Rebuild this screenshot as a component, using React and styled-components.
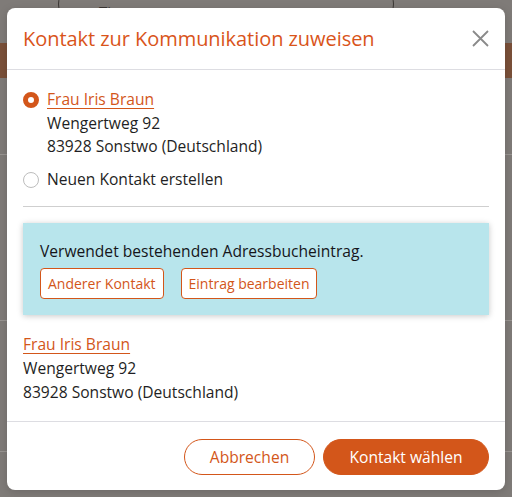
import React from "react";
import styled, { createGlobalStyle } from "styled-components";

const GlobalStyle = createGlobalStyle`
  html, body { margin: 0; padding: 0; }
  body {
    font-family: "Open Sans", "Noto Sans", sans-serif;
    background: #7f7b78;
    width: 512px;
    height: 497px;
    overflow: hidden;
  }
`;

const ORANGE = "#d3561a";
const TEXT = "#1f1f24";

const Page = styled.div`
  position: relative;
  width: 512px;
  height: 497px;
  overflow: hidden;
  background: #7f7b78;
  color: #222;
  display: flex;
  flex-direction: column;
`;

const PageTop = styled.div`
  height: 43px;
  display: flex;
  justify-content: center;
`;

const SearchPill = styled.div`
  width: 336px;
  height: 40px;
  margin-top: -16px;
  margin-left: -60px;
  border: 1.5px solid #3a3633;
  border-radius: 22px;
  font-size: 15px;
  color: #3a3633;
  display: flex;
  align-items: flex-end;
  padding: 0 0 2px 40px;
  box-sizing: border-box;
`;

const BrownBand = styled.div`
  height: 35px;
  background: #7a5039;
`;

const PageRow = styled.div`
  height: ${(p) => p.h}px;
  border-bottom: 1px solid #999592;
`;

const Backdrop = styled.div`
  position: absolute;
  inset: 0;
  display: flex;
  align-items: flex-start;
  justify-content: flex-start;
  padding: 8px 0 0 7px;
`;

const Modal = styled.div`
  width: 498px;
  height: 482px;
  background: #fff;
  border-radius: 8px;
  display: flex;
  flex-direction: column;
  box-shadow: 0 2px 10px rgba(0, 0, 0, 0.15);
`;

const Header = styled.div`
  height: 62px;
  box-sizing: border-box;
  padding: 0 16px;
  display: flex;
  align-items: center;
  justify-content: space-between;
  border-bottom: 1px solid #dddde2;
`;

const Title = styled.h2`
  margin: 0;
  font-size: 20px;
  font-weight: 500;
  color: #d9541a;
  letter-spacing: -0.05px;
`;

const CloseButton = styled.button`
  border: none;
  background: none;
  padding: 0;
  width: 18px;
  height: 18px;
  display: flex;
  align-items: center;
  justify-content: center;
  cursor: pointer;
`;

const Body = styled.div`
  flex: 1;
  padding: 18px 16px 0;
  display: flex;
  flex-direction: column;
`;

const Option = styled.label`
  display: flex;
  align-items: flex-start;
  gap: 8px;
  font-size: 15.6px;
  line-height: 23.5px;
  color: ${TEXT};
  margin-bottom: ${(p) => (p.last ? 0 : 9)}px;
`;

const Radio = styled.span`
  width: 16px;
  height: 16px;
  margin-top: 4px;
  box-sizing: border-box;
  border-radius: 50%;
  flex: none;
  border: ${(p) => (p.checked ? `5px solid ${ORANGE}` : "1px solid #bdbdbd")};
  background: #fff;
`;

const Lines = styled.div`
  display: flex;
  flex-direction: column;
`;

const Link = styled.a`
  color: ${ORANGE};
  text-decoration: underline;
  text-underline-offset: 3px;
  text-decoration-thickness: 1px;
  align-self: flex-start;
`;

const Divider = styled.hr`
  border: none;
  border-top: 1px solid #cfcfcf;
  margin: 15px 0 16px;
`;

const InfoBox = styled.div`
  background: #b8e5ec;
  padding: 16px 16px 16px 17px;
  box-shadow: 0 1px 6px rgba(0, 0, 0, 0.22);
  display: flex;
  flex-direction: column;
  gap: 5px;
`;

const InfoText = styled.div`
  font-size: 15.6px;
  line-height: 24px;
  color: #15151a;
`;

const InfoActions = styled.div`
  display: flex;
  gap: 17px;
`;

const SmallButton = styled.button`
  height: 31px;
  padding: 0 7px;
  font-family: inherit;
  font-size: 14px;
  color: ${ORANGE};
  background: #fff;
  border: 1px solid ${ORANGE};
  border-radius: 4px;
  cursor: pointer;
`;

const Contact = styled.div`
  margin-top: 17px;
  display: flex;
  flex-direction: column;
  font-size: 15.6px;
  line-height: 24px;
  color: ${TEXT};
`;

const Footer = styled.div`
  height: 69px;
  box-sizing: border-box;
  border-top: 1px solid #dddde2;
  padding: 17px 16px 16px;
  display: flex;
  justify-content: flex-end;
  gap: 8px;
`;

const PillButton = styled.button`
  height: 36px;
  width: ${(p) => p.w}px;
  border-radius: 18px;
  font-family: inherit;
  font-size: 15.6px;
  cursor: pointer;
  border: 1px solid ${ORANGE};
  background: ${(p) => (p.primary ? ORANGE : "#fff")};
  color: ${(p) => (p.primary ? "#fff" : ORANGE)};
`;

export default function App() {
  return (
    <>
      <GlobalStyle />
      <Page>
        <PageTop>
          <SearchPill>Tippen...</SearchPill>
        </PageTop>
        <BrownBand />
        <PageRow h={76} />
        <PageRow h={165} />
        <PageRow h={130} />
        <Backdrop>
          <Modal role="dialog">
            <Header>
              <Title>Kontakt zur Kommunikation zuweisen</Title>
              <CloseButton aria-label="Schließen">
                <svg width="17" height="17" viewBox="0 0 17 17">
                  <path d="M1 1L16 16M16 1L1 16" stroke="#8a8a8a" strokeWidth="1.8" fill="none" />
                </svg>
              </CloseButton>
            </Header>
            <Body>
              <Option>
                <Radio checked />
                <Lines>
                  <Link href="#">Frau Iris Braun</Link>
                  <span>Wengertweg 92</span>
                  <span>83928 Sonstwo (Deutschland)</span>
                </Lines>
              </Option>
              <Option last>
                <Radio />
                <Lines>
                  <span>Neuen Kontakt erstellen</span>
                </Lines>
              </Option>
              <Divider />
              <InfoBox>
                <InfoText>Verwendet bestehenden Adressbucheintrag.</InfoText>
                <InfoActions>
                  <SmallButton>Anderer Kontakt</SmallButton>
                  <SmallButton>Eintrag bearbeiten</SmallButton>
                </InfoActions>
              </InfoBox>
              <Contact>
                <Link href="#">Frau Iris Braun</Link>
                <span>Wengertweg 92</span>
                <span>83928 Sonstwo (Deutschland)</span>
              </Contact>
            </Body>
            <Footer>
              <PillButton w={131}>Abbrechen</PillButton>
              <PillButton primary w={166}>Kontakt wählen</PillButton>
            </Footer>
          </Modal>
        </Backdrop>
      </Page>
    </>
  );
}
